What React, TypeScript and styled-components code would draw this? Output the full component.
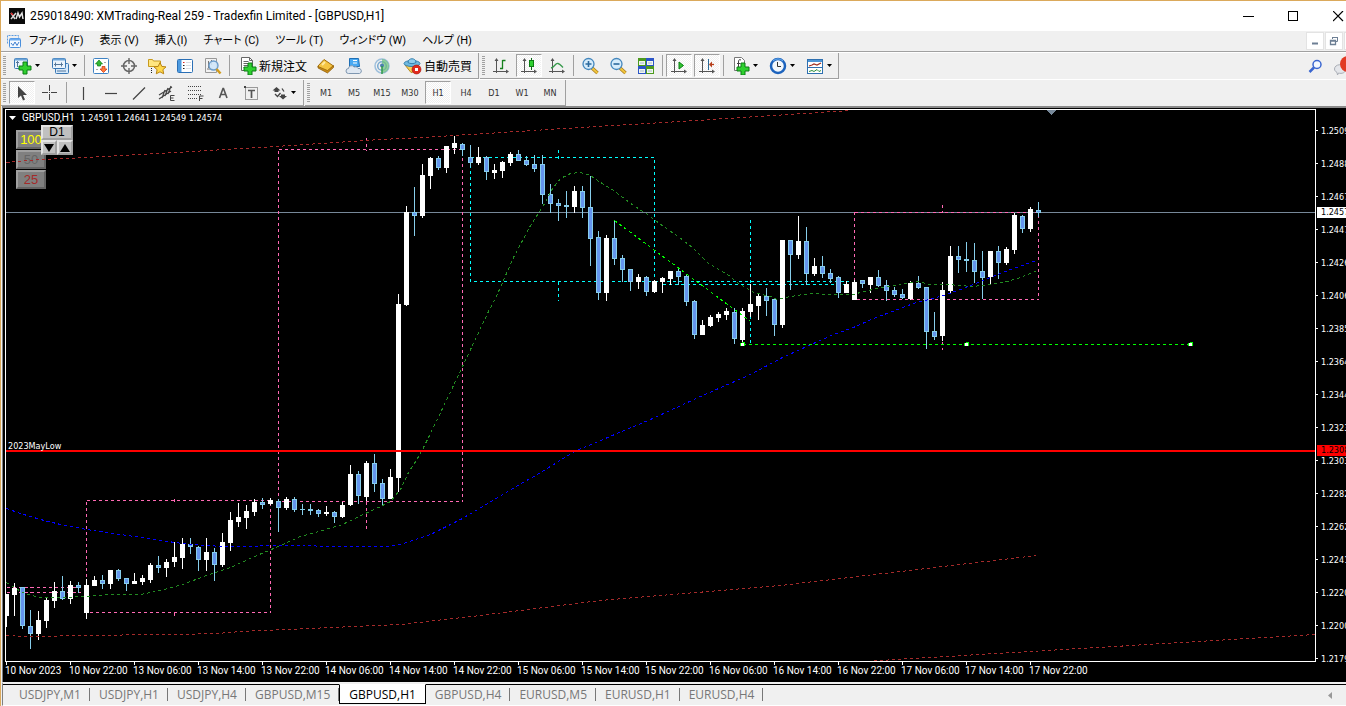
import React from "react";
import styled, { createGlobalStyle, css } from "styled-components";

const uiFont = `"Open Sans", "Noto Sans CJK JP", sans-serif`;
const smallFont = `"DejaVu Sans Condensed", "DejaVu Sans", sans-serif`;

const GlobalStyle = createGlobalStyle`
  *, *::before, *::after { box-sizing: border-box; }
  body { margin: 0; background: #f0f0f0; font-family: ${uiFont}; font-size: 12px; color: #000; }
  button { font: inherit; color: inherit; margin: 0; padding: 0; border: 0; background: none; cursor: default; }
  svg { display: block; flex: none; }
`;

const Window = styled.div`
  display: flex;
  flex-direction: column;
  min-height: 100vh;
  overflow: hidden;
  border-top: 1px solid #dba95b;
  border-left: 1px solid #dba95b;
`;

const TitleBar = styled.header`
  display: flex;
  align-items: center;
  height: 30px;
  padding-left: 8px;
  background: #fff;
`;

const TitleText = styled.h1`
  flex: 1;
  min-width: 0;
  margin: 0 0 0 5px;
  overflow: hidden;
  font-size: 12px;
  font-weight: 400;
  font-family: Roboto, sans-serif;
  line-height: 16px;
  white-space: nowrap;
`;

const CaptionButtons = styled.div`
  display: flex;
  width: 120px;
  overflow: hidden;
`;

const CaptionButton = styled.button`
  display: flex;
  flex: none;
  align-items: center;
  justify-content: center;
  width: 45px;
  height: 30px;
`;

const MenuBar = styled.nav`
  display: flex;
  align-items: center;
  height: 21px;
  padding-left: 5px;
  border-bottom: 1px solid #a0a0a0;
  background: #f0f0f0;
`;

const MenuItems = styled.div`
  display: flex;
  flex: 1;
  gap: 16px;
  margin-left: 8px;
`;

const MenuItem = styled.button`
  font-family: Roboto, "Noto Sans CJK JP", sans-serif;
  font-size: 11px;
  font-feature-settings: "palt";
  line-height: 16px;
  white-space: nowrap;
`;

const MdiButtons = styled.div`
  display: flex;
  gap: 1px;
  width: 40px;
  overflow: hidden;
`;

const MdiButton = styled.button`
  display: flex;
  flex: none;
  align-items: center;
  justify-content: center;
  width: 18px;
  height: 18px;
  border: 1px solid #e3e3e3;
  background: #fff;
`;

const ToolRow = styled.div`
  display: flex;
  height: 27px;
  border-top: 1px solid #fff;
  background: #f0f0f0;
`;

const ToolGroup = styled.div`
  display: flex;
  align-items: center;
  padding-right: 1px;
  border-right: 1px solid #a0a0a0;
  border-bottom: 1px solid #a0a0a0;
  margin-right: 1px;
`;

const Grip = styled.i`
  width: 3px;
  height: 19px;
  margin: 0 2px;
  background: repeating-linear-gradient(#a0a0a0 0 1px, #f0f0f0 1px 2px);
`;

const Divider = styled.i`
  width: 1px;
  height: 21px;
  margin: 0 2px;
  background: #a0a0a0;
`;

const ToolButton = styled.button<{ $wide?: boolean; $pressed?: boolean }>`
  display: flex;
  align-items: center;
  justify-content: center;
  gap: 3px;
  width: ${(p) => (p.$wide ? 37 : p.$pressed ? 26 : 28)}px;
  height: 23px;
  font-family: ${smallFont};
  font-size: 9px;
  color: #333;
  ${(p) =>
    p.$pressed &&
    css`
      margin: 0 1px;
      border: 1px solid #a0a0a0;
      border-right-color: #fff;
      border-bottom-color: #fff;
      background: repeating-conic-gradient(#fff 0 25%, #f0f0f0 0 50%) 0 0 / 2px 2px;
    `}
`;

const LabelButton = styled.button`
  display: flex;
  align-items: center;
  gap: 2px;
  padding: 0 5px 0 7px;
  height: 23px;
  font-family: "Noto Sans CJK JP", sans-serif;
  font-size: 12px;
  line-height: 16px;
  white-space: nowrap;
`;

const Spacer = styled.div`
  flex: 1;
`;

const ToolExtras = styled.div`
  display: flex;
  align-items: center;
  gap: 10px;
  width: 38px;
  overflow: hidden;
`;

const ChartPanel = styled.main`
  display: grid;
  flex: 1;
  grid-template-columns: minmax(0, 1fr) 30px;
  grid-template-rows: auto 1fr;
  margin-left: 1px;
  padding: 1px 0 0 2px;
  border-top: 2px solid #8a8a8a;
  border-left: 1px solid #808080;
  background: #000;
  color: #fff;
  font-family: ${smallFont};
  font-size: 9px;
`;

const Plot = styled.section`
  position: relative;
  border: 1px solid #fff;
`;

const ChartCanvas = styled.svg`
  position: relative;
  z-index: 1;
  width: 100%;
`;

const ChartCaption = styled.div`
  position: absolute;
  z-index: 2;
  top: 2px;
  left: 3px;
  display: flex;
  align-items: center;
  gap: 6px;
  line-height: 12px;
  white-space: nowrap;
`;

const SymbolName = styled.span`
  font-family: Roboto, sans-serif;
  font-size: 10px;
`;

const LevelName = styled.span`
  position: absolute;
  z-index: 2;
  top: 330px;
  left: 2px;
  font-size: 9px;
  line-height: 12px;
`;

const LotPanel = styled.div`
  position: absolute;
  top: 20px;
  left: 10px;
  display: flex;
  flex-direction: column;
  gap: 1px;
`;

const LotButton = styled.button<{ $color: string }>`
  width: 30px;
  height: 19px;
  border: 2px solid #a0a0a0;
  border-right-color: #646464;
  border-bottom-color: #646464;
  background: #808080;
  color: ${(p) => p.$color};
  font-family: "Liberation Sans", sans-serif;
  font-size: 13px;
  line-height: 15px;
`;

const FramePanel = styled.div`
  position: absolute;
  z-index: 2;
  top: 15px;
  left: 35px;
  display: grid;
  grid-template-columns: 16px 16px;
`;

const FrameButton = styled.button<{ $span?: boolean }>`
  display: flex;
  align-items: center;
  justify-content: center;
  grid-column: ${(p) => (p.$span ? "span 2" : "auto")};
  height: 15px;
  border: 2px solid #e3e3e3;
  border-right-color: #a0a0a0;
  border-bottom-color: #a0a0a0;
  background: #c0c0c0;
  color: #000;
  font-family: "Liberation Sans", sans-serif;
  font-size: 12px;
  line-height: 11px;
`;

const PriceAxis = styled.div`
  position: relative;
  overflow: hidden;
  height: 572px;
  margin-bottom: -19px;
  padding-top: 5px;
`;

const Price = styled.div`
  display: flex;
  align-items: center;
  gap: 3px;
  height: 33px;
  &::before {
    content: "";
    flex: none;
    width: 2px;
    height: 1px;
    background: #fff;
  }
`;

const PriceTag = styled.div<{ $top: number; $bg: string }>`
  position: absolute;
  top: ${(p) => p.$top}px;
  left: 1px;
  width: 40px;
  padding-left: 4px;
  background: ${(p) => p.$bg};
  color: #000;
  line-height: 11px;
`;

const TimeAxis = styled.div`
  display: flex;
  min-height: 20px;
  overflow: hidden;
`;

const TimeLabel = styled.div`
  flex: none;
  width: 64px;
  font-family: Roboto, sans-serif;
  font-size: 10px;
  line-height: 12px;
  white-space: nowrap;
  &::before {
    content: "";
    display: block;
    width: 1px;
    height: 3px;
    margin-left: 1px;
    background: #fff;
  }
`;

const TabBar = styled.nav`
  display: flex;
  height: 24px;
  margin-left: 1px;
  border-top: 2px solid #f0f0f0;
  border-left: 1px solid #808080;
  border-bottom: 1px solid #fff;
  background: #f0f0f0;
`;

const TabStrip = styled.div`
  display: flex;
  flex: 1;
  align-items: flex-start;
  border-top: 1px solid #000;
  padding-left: 7px;
`;

const Tab = styled.button<{ $active?: boolean }>`
  position: relative;
  height: 18px;
  padding: 0 9px;
  color: #777;
  font-size: 12px;
  line-height: 17px;
  white-space: nowrap;
  &::after {
    content: "";
    position: absolute;
    top: 3px;
    right: 0;
    width: 1px;
    height: 13px;
    background: ${(p) => (p.$active ? "none" : "#777")};
  }
  ${(p) =>
    p.$active &&
    css`
      height: 20px;
      margin-top: -1px;
      border: 1px solid #000;
      border-top-color: #fff;
      background: #fff;
      color: #000;
    `}
`;

const TabScroll = styled.button`
  display: flex;
  align-items: center;
  width: 18px;
  border-top: 1px solid #000;
`;

/* ---------- icons ---------- */

const Svg = ({ w = 18, h = 18, children }: { w?: number; h?: number; children: React.ReactNode }) => (
  <svg width={w} height={h} viewBox={`0 0 ${w} ${h}`} fill="none" aria-hidden="true">
    {children}
  </svg>
);

const Caret = () => (
  <Svg w={5} h={3}>
    <path d="M0 0h5L2.500 3z" fill="#000" />
  </Svg>
);

const Plus = () => (
  <path d="M9 7h4v4h4v4h-4v4H9v-4H5v-4h4z" fill="#2fd02f" stroke="#0b7d14" />
);

const NewChartIcon = () => (
  <Svg w={19} h={19}>
    <rect x="1.500" y="2.500" width="13" height="10" rx="1" fill="#eaf4fd" stroke="#3a78b5" />
    <path d="M2 3.500h12" stroke="#6ca4d8" strokeWidth="2" />
    <path d="M4.500 5v6M3 6.500h3M10 7h2" stroke="#55779a" />
    <g transform="translate(1 -1)"><Plus /></g>
  </Svg>
);
const ProfilesIcon = () => (
  <Svg>
    <rect x="4.500" y="6.500" width="13" height="10" rx="1" fill="#d5e9fb" stroke="#3a78b5" />
    <rect x="1.500" y="1.500" width="13" height="10" rx="1" fill="#eaf4fd" stroke="#3a78b5" />
    <path d="M2 2.500h12" stroke="#6ca4d8" strokeWidth="2" />
    <path d="M3 7.500h9M4.500 5.500v4M10.500 5.500v4M6 14h9" stroke="#55779a" />
  </Svg>
);
const MarketWatchIcon = () => (
  <Svg>
    <rect x="1.500" y="1.500" width="15" height="15" rx="1" fill="#fff" stroke="#3f83c4" />
    <path d="M7 3l3.500 4H8.500v2h-3V7H3.500z" fill="#35b835" stroke="#0b7d14" strokeWidth=".7" />
    <path d="M11.500 15.500L15 12h-2v-2.500h-3V12H8z" fill="#ff7a3c" stroke="#c8300d" strokeWidth=".7" />
    <path d="M4 12.500h2M12 5.500h2" stroke="#aaa" />
  </Svg>
);
const NavigatorIcon = () => (
  <Svg>
    <circle cx="9" cy="9" r="5.500" stroke="#666" strokeWidth="1.500" />
    <path d="M9 1v6M9 11v6M1 9h6M11 9h6" stroke="#666" strokeWidth="1.400" />
  </Svg>
);
const FolderStarIcon = () => (
  <Svg w={20}>
    <path d="M1.500 9.500v-7h4l1 1.500h7v5.500z" fill="#ffe680" stroke="#c79a1e" />
    <path d="M4.500 11v6" stroke="#222" strokeDasharray="1 1" />
    <path d="M13 5.500l1.800 3.900 4.200.5-3.100 2.800.8 4.100L13 14.800l-3.700 2 .8-4.100L7 9.900l4.200-.5z" fill="#ffd84a" stroke="#b88412" />
  </Svg>
);
const TerminalIcon = () => (
  <Svg>
    <rect x="1.500" y="2.500" width="15" height="13" rx="1" fill="#fff" stroke="#2a6fb5" />
    <path d="M2 3h3.500v12H2z" fill="#4d9be0" />
    <path d="M7 8.500h1.500M7 11.500h1.500" stroke="#222" />
    <path d="M10 5.500h5M10 8.500h5M10 11.500h5" stroke="#d8dde5" />
    <path d="M7 5.500h1.500" stroke="#e02020" />
  </Svg>
);
const TesterIcon = () => (
  <Svg>
    <path d="M1.500 1.500h11v14h-11z" fill="#f2f2f2" stroke="#999" />
    <path d="M4.500 4v7M7.500 3v5M3 12h6" stroke="#777" />
    <circle cx="9.500" cy="8.500" r="4.500" fill="#cfe6fa" fillOpacity=".9" stroke="#6b9ccb" strokeWidth="1.400" />
    <path d="M12.500 12l4 4.500" stroke="#d19b1c" strokeWidth="2.500" />
  </Svg>
);
const NewOrderIcon = () => (
  <Svg w={18} h={19}>
    <path d="M2.500 1.500h8l3 3v10h-11z" fill="#fff" stroke="#666" />
    <path d="M10.500 1.500v3h3M4.500 5.500h5M4.500 7.500h7M4.500 9.500h5M4.500 11.500h4" stroke="#666" />
    <Plus />
  </Svg>
);
const EditorIcon = () => (
  <Svg>
    <path d="M1 9l6-6.500L16.500 9l-6 6L1 10z" fill="#f5c542" stroke="#a36f0c" />
    <path d="M1 9.500l9.500 4 6-5v2L10.500 16 1 11z" fill="#c98c17" stroke="#8c5b08" strokeWidth=".7" />
    <path d="M5 8l3-3" stroke="#ffe9a0" strokeWidth="2" />
  </Svg>
);
const VpsIcon = () => (
  <Svg>
    <path d="M4.500 1.500h9l1 8h-10z" fill="#49a9f2" stroke="#1f6fb5" />
    <path d="M8 3.500h4M8 6h4" stroke="#fff" />
    <path d="M3.500 16.500a2.500 2.500 0 010-5 3 3 0 015.500-1.500 3 3 0 014 1.500 2.500 2.500 0 011.500 5z" fill="#dfe8f2" stroke="#7f97b0" />
  </Svg>
);
const SignalIcon = () => (
  <Svg>
    <circle cx="9" cy="9" r="7" stroke="#9dbfdc" strokeWidth="1.500" />
    <circle cx="9" cy="9" r="4.300" stroke="#7aaad0" strokeWidth="1.500" />
    <path d="M9 9V2a7 7 0 010 14z" fill="#6cc07a" fillOpacity=".7" />
    <circle cx="9" cy="8.500" r="2" fill="#4c7fb0" />
    <path d="M9 9v8" stroke="#2f9a48" strokeWidth="1.500" />
  </Svg>
);
const AutoTradeIcon = () => (
  <Svg w={19} h={19}>
    <path d="M2 9h13l-3 6.500-4 1z" fill="#f6cf58" stroke="#b98a19" />
    <ellipse cx="9" cy="7.500" rx="8" ry="3" fill="#6fb9e0" stroke="#3580ad" />
    <path d="M5 6.500c0-5 8-5 8 0-2 1.500-6 1.500-8 0z" fill="#8fcdee" stroke="#3580ad" />
    <circle cx="13.500" cy="13.500" r="4.500" fill="#e02a1c" stroke="#a81208" strokeWidth=".6" />
    <rect x="12" y="12" width="3" height="3" fill="#fff" />
  </Svg>
);
const Axes = () => (
  <>
    <path d="M4.500 3v13M1 14.500h14" stroke="#555" />
    <path d="M4.500 1l2 3h-4zM17 14.500l-3 2v-4z" fill="#555" />
  </>
);
const BarsIcon = () => (
  <Svg><Axes /><path d="M10.500 3v9M10.500 3.500h3M8 11.500h3" stroke="#16801d" strokeWidth="1.300" /></Svg>
);
const CandlesIcon = () => (
  <Svg><Axes /><path d="M11.500 1v12" stroke="#0b6b14" /><rect x="9.500" y="3.500" width="4" height="6" fill="#2fd02f" stroke="#0b7d14" /></Svg>
);
const LineIcon = () => (
  <Svg><Axes /><path d="M3 11c4-1 4-5 7-4.500 2 .5 3 2 5 4" stroke="#35994a" strokeWidth="1.300" /></Svg>
);
const ZoomIcon = ({ plus }: { plus?: boolean }) => (
  <Svg>
    <path d="M11 11l5.500 5" stroke="#a8791a" strokeWidth="3.500" />
    <path d="M11 11l5.500 5" stroke="#f0c63e" strokeWidth="2" />
    <circle cx="7.500" cy="7" r="5.500" fill="#d6ecfb" stroke="#4487bd" strokeWidth="1.300" />
    <path d={plus ? "M4.500 7h6M7.500 4v6" : "M4.500 7h6"} stroke="#2c6a9e" strokeWidth="1.600" />
  </Svg>
);
const TileIcon = () => (
  <Svg>
    <rect x="1" y="1" width="8" height="8" fill="#4c9a1e" />
    <rect x="9" y="1" width="8" height="8" fill="#2c55c8" />
    <rect x="1" y="9" width="8" height="8" fill="#2c55c8" />
    <rect x="9" y="9" width="8" height="8" fill="#4c9a1e" />
    <path d="M2 4h6v4H2zM10 4h6v4h-6zM2 12h6v4H2zM10 12h6v4h-6z" fill="#f2f7ee" />
    <path d="M3 6h4M11 6h4M3 14h4M11 14h4" stroke="#a9bccf" />
  </Svg>
);
const AutoScrollIcon = () => (
  <Svg><Axes /><path d="M9 5l4.500 3.500L9 12z" fill="#2fc52f" stroke="#0b7d14" /></Svg>
);
const ShiftIcon = () => (
  <Svg><Axes /><path d="M10.500 2v11" stroke="#2a6a98" /><path d="M16 7.500h-3" stroke="#b8401c" strokeWidth="1.300" /><path d="M11 7.500l3-3v6z" fill="#b8401c" /></Svg>
);
const IndicatorsIcon = () => (
  <Svg w={18} h={19}>
    <path d="M2.500 1.500h7l3 3v10h-10z" fill="#fff" stroke="#777" />
    <path d="M9 4c-2-1-2.500 0-2.500 2v6M5 7.500h3.500" stroke="#444" />
    <Plus />
  </Svg>
);
const PeriodsIcon = () => (
  <Svg>
    <circle cx="9" cy="9" r="7" fill="#f4f8fc" stroke="#1d63bd" strokeWidth="2.500" />
    <path d="M4 4a7 7 0 0110 0" stroke="#6db2f2" />
    <path d="M8.500 5v4.500H12" stroke="#333" />
  </Svg>
);
const TemplatesIcon = () => (
  <Svg>
    <rect x="1.500" y="2.500" width="15" height="14" fill="#fff" stroke="#2f70b0" />
    <path d="M2 4h14" stroke="#4c95d6" strokeWidth="2" />
    <path d="M3 9l3-1 2-1 3 1 4-2" stroke="#a03020" strokeWidth="1.300" />
    <path d="M2 10.500h14" stroke="#2f70b0" />
    <path d="M3 14.500l3-1 2 1 3-2 2 2 2-1" stroke="#2b8f3a" />
  </Svg>
);

const CursorIcon = () => (
  <Svg><path d="M5 2v12l3-2.500 2 5 2-1-2-4.500h4z" fill="#444" /></Svg>
);
const CrosshairIcon = () => (
  <Svg><path d="M8.500 1v6M8.500 10v6M1 8.500h6M10 8.500h6M8 8.500h1" stroke="#444" /></Svg>
);
const StrokeIcon = ({ d }: { d: string }) => (
  <Svg><path d={d} stroke="#444" strokeWidth="1.200" /></Svg>
);
const ChannelIcon = () => (
  <Svg>
    <path d="M1 11l13-8M1 15l12-8M4 14L7 6M7 12l3-8M10 10l3-8" stroke="#444" strokeWidth="1.200" />
    <path d="M16.500 11.500h-4v5h4M12.500 14h3" stroke="#444" />
  </Svg>
);
const FiboIcon = () => (
  <Svg>
    <path d="M2 2.500h14M2 6.500h14M2 10.500h14M2 14.500h9" stroke="#444" strokeDasharray="1 1" />
    <path d="M13.500 17v-5h4M13.500 14.500h3" stroke="#444" />
  </Svg>
);
const TextIcon = () => (
  <Svg><path d="M5.500 14L9 4.500h.5L13 14M6.500 10.500h5.500" stroke="#555" strokeWidth="1.600" /></Svg>
);
const TextLabelIcon = () => (
  <Svg>
    <rect x="3.500" y="3.500" width="12" height="12" stroke="#444" strokeDasharray="1 1" />
    <path d="M6 6.500h7M9.500 6.500V14" stroke="#555" strokeWidth="1.700" />
    <path d="M2 2h2v2H2z" fill="#444" />
  </Svg>
);
const ArrowsIcon = () => (
  <Svg w={16}>
    <path d="M4.500 3l4 3.500h-2V8h-4V6.500h-2z" fill="#444" />
    <path d="M11 15.500L7 12h2v-1.500h4V12h2z" fill="#444" />
    <path d="M3 10l2.500 2.500L8.500 9M10 4.500l2 3" stroke="#444" strokeWidth="1.300" />
  </Svg>
);

/* ---------- chart data ---------- */

// [high, bodyTop, bodyBottom, low, rising]
type Candle = [number, number, number, number, number];
const candles: Candle[] = [
  [594, 594, 616, 627, 1], [583, 588, 595, 616, 1], [587, 587, 626, 629, 0], [610, 626, 634, 649, 0],
  [611, 620, 634, 640, 1], [597, 600, 621, 628, 1], [582, 591, 601, 608, 1], [576, 591, 599, 600, 0],
  [581, 585, 599, 604, 1], [582, 585, 588, 593, 0], [579, 585, 613, 619, 1], [576, 580, 586, 586, 1],
  [575, 580, 584, 589, 0], [570, 570, 584, 589, 1], [569, 570, 579, 581, 0], [578, 578, 584, 591, 0],
  [573, 581, 584, 584, 1], [575, 578, 582, 585, 1], [563, 565, 580, 583, 1], [556, 565, 568, 573, 0],
  [559, 562, 568, 577, 1], [542, 557, 562, 567, 1], [538, 544, 558, 569, 1], [538, 544, 547, 554, 0],
  [546, 547, 560, 571, 0], [538, 552, 560, 571, 1], [548, 552, 565, 581, 0], [533, 542, 565, 567, 1],
  [512, 520, 543, 551, 1], [503, 517, 522, 527, 1], [505, 511, 518, 529, 1], [499, 502, 512, 516, 1],
  [498, 502, 505, 509, 0], [498, 500, 504, 505, 1], [499, 501, 508, 532, 0], [497, 499, 508, 510, 1],
  [497, 499, 510, 512, 0], [504, 509, 510, 515, 0], [504, 509, 511, 515, 0], [509, 510, 514, 517, 0],
  [506, 512, 514, 516, 1], [511, 512, 517, 523, 0], [502, 505, 517, 518, 1], [465, 474, 505, 506, 1],
  [471, 474, 496, 504, 0], [461, 463, 497, 501, 1], [454, 463, 484, 492, 0], [479, 483, 499, 506, 0],
  [469, 477, 499, 499, 1], [294, 304, 478, 492, 1], [206, 212, 305, 306, 1], [187, 212, 216, 236, 0],
  [164, 175, 216, 218, 1], [157, 158, 176, 189, 1], [156, 158, 168, 170, 0], [146, 146, 168, 173, 1],
  [136, 143, 148, 154, 1], [143, 144, 150, 156, 0], [145, 157, 163, 167, 0], [147, 157, 163, 165, 1],
  [156, 157, 172, 180, 0], [164, 170, 173, 179, 1], [161, 162, 171, 178, 1], [152, 154, 163, 166, 1],
  [150, 154, 161, 161, 0], [156, 160, 165, 166, 0], [155, 164, 169, 172, 0], [155, 164, 195, 204, 0],
  [184, 194, 204, 213, 0], [199, 203, 206, 221, 0], [191, 205, 207, 218, 0], [186, 191, 207, 213, 1],
  [186, 191, 208, 218, 0], [176, 207, 239, 266, 0], [231, 237, 293, 300, 0], [235, 238, 293, 301, 1],
  [220, 238, 259, 265, 0], [255, 258, 270, 282, 0], [269, 269, 282, 291, 0], [274, 277, 282, 289, 1],
  [276, 277, 292, 296, 0], [280, 281, 292, 293, 1], [277, 278, 282, 293, 1], [271, 271, 279, 285, 1],
  [267, 271, 277, 285, 0], [275, 276, 302, 306, 0], [300, 301, 335, 339, 0], [320, 325, 335, 335, 1],
  [315, 317, 326, 327, 1], [312, 314, 318, 322, 1], [308, 311, 315, 320, 1], [308, 312, 339, 344, 0],
  [308, 311, 340, 343, 1], [284, 304, 312, 317, 1], [294, 296, 306, 320, 1], [288, 296, 301, 316, 0],
  [298, 299, 325, 336, 0], [240, 240, 325, 328, 1], [240, 240, 255, 290, 0], [216, 241, 255, 259, 1],
  [227, 241, 274, 285, 0], [258, 266, 274, 276, 1], [256, 266, 274, 278, 0], [269, 273, 279, 283, 0],
  [276, 277, 293, 298, 0], [281, 284, 293, 293, 1], [280, 282, 300, 300, 1], [280, 280, 284, 288, 0],
  [277, 277, 285, 293, 1], [270, 277, 286, 287, 0], [280, 285, 291, 301, 0], [287, 290, 295, 297, 0],
  [289, 294, 298, 299, 0], [281, 283, 299, 300, 1], [276, 283, 288, 289, 0], [287, 287, 332, 349, 0],
  [312, 331, 337, 340, 0], [282, 290, 336, 341, 1], [246, 256, 291, 294, 1], [246, 256, 260, 273, 0],
  [242, 259, 261, 272, 0], [243, 260, 272, 283, 0], [251, 271, 278, 299, 0], [251, 251, 277, 285, 1],
  [246, 251, 263, 279, 0], [247, 249, 263, 265, 1], [213, 215, 250, 254, 1], [215, 216, 229, 233, 0],
  [207, 209, 229, 232, 1], [202, 210, 213, 217, 0],
];

const averages = [
  {
    color: "#0000ff",
    points:
      "6,508 20,513 40,519 60,524 86,529 112,533 134,536 160,540 182,543 206,545 222,546 250,546 270,545 300,545 330,546 385,546 400,544 430,534 462,518 507,491 540,472 576,450 600,440 650,419 700,396 750,374 780,358 793,352 813,343 833,334 853,327 873,318 897,309 913,303 943,295 963,288 990,277 1010,269 1036,260",
  },
  {
    color: "#228b22",
    points:
      "6,582 14,587 22,592 38,597 60,597 86,596 110,594 140,594 160,590 182,584 206,575 230,567 254,556 278,546 300,536 318,531 342,524 367,512 380,506 390,501 395,495 400,489 408,472 417,458 423,447 430,433 454,383 488,311 495,298 502,282 513,257 530,225 543,205 552,188 560,178 570,173 580,172 590,175 597,180 613,190 633,205 647,214 663,226 679,237 693,248 707,262 727,274 737,282 747,288 753,292 770,296 777,299 790,296 810,293 833,294 853,294 863,291 877,288 890,286 903,283 917,281 930,284 947,284 960,285 970,286 983,285 1003,282 1017,278 1037,270",
  },
  { color: "#a52a2a", points: "6,162 40,159 87,157 260,147 380,139 422,137 470,134 580,127 680,121 850,110" },
  {
    color: "#a52a2a",
    points: "6,635 26,636 47,636 67,635 177,634 217,633 240,631 400,624 480,615 600,600 780,585 900,571 1036,555",
  },
  { color: "#a52a2a", points: "862,661 1315,634" },
  { color: "#00ff00", points: "614,220 750,321" },
];

const pink = "#ff69b4";
const cyan = "#00ffff";
const lime = "#00ff00";
const boxes = [
  { color: pink, d: "M6 587H80M6 592H80M86 500H270V612H86ZM174 498V502M174 612V615" },
  { color: pink, d: "M278 149H462V501H278ZM366 137V150M366 501V529" },
  { color: pink, d: "M854 212H1038V299H854ZM942 204V212M942 341V349" },
  { color: cyan, d: "M470 157H654V281H470ZM558 149V158M558 281V300" },
  { color: cyan, d: "M654 281H848M662 284H848M750 219V343" },
  { color: lime, d: "M742 344H1190" },
];

const prices = [
  "1.25095", "1.24885", "1.24675", "1.24470", "1.24260", "1.24060", "1.23850", "1.23640", "1.23440",
  "1.23230", "1.23030", "1.22820", "1.22620", "1.22410", "1.22200", "1.22000", "1.21790",
];

const times = [
  "10 Nov 2023", "10 Nov 22:00", "13 Nov 06:00", "13 Nov 14:00", "13 Nov 22:00", "14 Nov 06:00",
  "14 Nov 14:00", "14 Nov 22:00", "15 Nov 06:00", "15 Nov 14:00", "15 Nov 22:00", "16 Nov 06:00",
  "16 Nov 14:00", "16 Nov 22:00", "17 Nov 06:00", "17 Nov 14:00", "17 Nov 22:00",
];

const Chart = () => (
  <ChartCanvas height={551} role="img" aria-label="GBPUSD H1 candlestick chart">
    <g transform="translate(-6 -110)" shapeRendering="crispEdges">
      <rect x="6" y="212" width="100%" height="1" fill="#778899" />
      <g fill="none" strokeWidth={1} strokeDasharray="3 3" transform="translate(.5 .5)">
        {boxes.map((s) => (
          <path key={s.d} d={s.d} stroke={s.color} />
        ))}
      </g>
      {candles.map(([high, top, bottom, low, up], i) => {
        const x = 6 + i * 8;
        const edge = up ? "#fff" : "#87ceeb";
        return (
          <g key={i}>
            <rect x={x} y={high} width={1} height={low - high} fill={edge} />
            <rect x={x - 2} y={top} width={5} height={bottom - top} fill={edge} />
            {!up && bottom - top > 2 && (
              <rect x={x - 1} y={top + 1} width={3} height={bottom - top - 2} fill="#6495ed" />
            )}
          </g>
        );
      })}
      <g fill="none" strokeWidth={1} strokeDasharray="3 3" transform="translate(.5 .5)">
        {averages.map((s) => (
          <polyline key={s.points} points={s.points} stroke={s.color} />
        ))}
      </g>
      {[742, 966, 1190].map((x) => (
        <g key={x}>
          <path d={`M${x} 342h3v4h-1v-3h-2zM${x - 2} 343h1v3h-1z`} fill={lime} />
          <rect x={x - 1} y="343" width="3" height="3" fill="#fff" />
        </g>
      ))}
      <rect x="6" y="450" width="100%" height="2" fill="#ff0000" />
      <path d="M1046 110h11l-5.500 5z" fill="#778899" />
    </g>
  </ChartCanvas>
);

const menus = ["ファイル (F)", "表示 (V)", "挿入(I)", "チャート (C)", "ツール (T)", "ウィンドウ (W)", "ヘルプ (H)"];
const periods = ["M1", "M5", "M15", "M30", "H1", "H4", "D1", "W1", "MN"];
const tabs = [
  "USDJPY,M1", "USDJPY,H1", "USDJPY,H4", "GBPUSD,M15", "GBPUSD,H1", "GBPUSD,H4", "EURUSD,M5", "EURUSD,H1", "EURUSD,H4",
];

export default function App() {
  return (
    <Window>
      <GlobalStyle />
      <TitleBar>
        <Svg w={16} h={16}>
          <rect width="16" height="16" fill="#0a0a0a" />
          <path d="M2 5l4 6M7 5l-5 6" stroke="#d8d8d8" strokeWidth="1.500" />
          <path d="M2 5l2 2" stroke="#e02020" strokeWidth="1.500" />
          <path d="M7 11l2-6 1.500 4L13 5l1 6" stroke="#e6e6e6" strokeWidth="1.500" />
        </Svg>
        <TitleText>259018490: XMTrading-Real 259 - Tradexfin Limited - [GBPUSD,H1]</TitleText>
        <CaptionButtons>
          <CaptionButton aria-label="Minimize"><Svg w={11} h={11}><path d="M0 5.500h11" stroke="#000" /></Svg></CaptionButton>
          <CaptionButton aria-label="Maximize"><Svg w={11} h={11}><rect x=".5" y=".5" width="9" height="9" stroke="#000" /></Svg></CaptionButton>
          <CaptionButton aria-label="Close"><Svg w={11} h={11}><path d="M0 0l10 10M10 0L0 10" stroke="#000" strokeWidth="1.200" /></Svg></CaptionButton>
        </CaptionButtons>
      </TitleBar>

      <MenuBar>
        <Svg w={15} h={15}>
          <path d="M1.500 9.500v-8h11v3" stroke="#5b9be0" strokeDasharray="2 1" />
          <rect x="3.500" y="4.500" width="11" height="9" rx="1" fill="#f4f9ff" stroke="#4a8fdc" />
          <path d="M4 5.500h10" stroke="#6aaaf0" strokeWidth="2" />
          <path d="M5 9l2 2.500L9 8l2 3.500L13 8" stroke="#3f7fd0" />
        </Svg>
        <MenuItems>{menus.map((m) => <MenuItem key={m}>{m}</MenuItem>)}</MenuItems>
        <MdiButtons>
          <MdiButton aria-label="Minimize chart"><Svg w={10} h={10}><path d="M2 7.500h6" stroke="#6d7f94" strokeWidth="2" /></Svg></MdiButton>
          <MdiButton aria-label="Restore chart">
            <Svg w={10} h={10}>
              <path d="M3.500 3V1.500h5v4H7M3 1.500h6" stroke="#6d7f94" />
              <path d="M1.500 4.500h5v4h-5zM1 5h6" stroke="#6d7f94" strokeWidth="1.300" />
            </Svg>
          </MdiButton>
          <MdiButton aria-label="Close chart" />
        </MdiButtons>
      </MenuBar>

      <ToolRow>
        <ToolGroup>
          <Grip />
          <ToolButton $wide aria-label="New chart"><NewChartIcon /><Caret /></ToolButton>
          <ToolButton $wide aria-label="Profiles"><ProfilesIcon /><Caret /></ToolButton>
          <Divider />
          <ToolButton aria-label="Market watch"><MarketWatchIcon /></ToolButton>
          <ToolButton aria-label="Data window"><NavigatorIcon /></ToolButton>
          <ToolButton aria-label="Navigator"><FolderStarIcon /></ToolButton>
          <ToolButton aria-label="Terminal"><TerminalIcon /></ToolButton>
          <ToolButton aria-label="Strategy tester"><TesterIcon /></ToolButton>
          <Divider />
          <LabelButton><NewOrderIcon />新規注文</LabelButton>
          <ToolButton aria-label="MetaEditor"><EditorIcon /></ToolButton>
          <ToolButton aria-label="Virtual hosting"><VpsIcon /></ToolButton>
          <ToolButton aria-label="Signals"><SignalIcon /></ToolButton>
          <LabelButton><AutoTradeIcon />自動売買</LabelButton>
        </ToolGroup>
        <ToolGroup>
          <Grip />
          <ToolButton aria-label="Bar chart"><BarsIcon /></ToolButton>
          <ToolButton $pressed aria-label="Candlesticks"><CandlesIcon /></ToolButton>
          <ToolButton aria-label="Line chart"><LineIcon /></ToolButton>
          <Divider />
          <ToolButton aria-label="Zoom in"><ZoomIcon plus /></ToolButton>
          <ToolButton aria-label="Zoom out"><ZoomIcon /></ToolButton>
          <ToolButton aria-label="Tile windows"><TileIcon /></ToolButton>
          <Divider />
          <ToolButton $pressed aria-label="Auto scroll"><AutoScrollIcon /></ToolButton>
          <ToolButton $pressed aria-label="Chart shift"><ShiftIcon /></ToolButton>
          <Divider />
          <ToolButton $wide aria-label="Indicators"><IndicatorsIcon /><Caret /></ToolButton>
          <ToolButton $wide aria-label="Periods"><PeriodsIcon /><Caret /></ToolButton>
          <ToolButton $wide aria-label="Templates"><TemplatesIcon /><Caret /></ToolButton>
        </ToolGroup>
        <Spacer />
        <ToolExtras>
          <button aria-label="Search">
            <Svg w={15} h={15}>
              <circle cx="9" cy="5.500" r="4" fill="#f4f9ff" stroke="#3a66d0" strokeWidth="1.500" />
              <path d="M6 8.500L1.500 13" stroke="#3a66d0" strokeWidth="2.500" />
            </Svg>
          </button>
          <button aria-label="Notifications">
            <Svg w={22} h={20}>
              <path d="M1.500 13c0-5 9-6 11-1 1 5-4 6-7 5l-1 2-.5-2.500c-1.500-1-2.500-2-2.500-3.500z" fill="#e4e6ea" stroke="#a9adb5" />
              <circle cx="15" cy="8" r="8" fill="#e23a24" />
            </Svg>
          </button>
        </ToolExtras>
      </ToolRow>

      <ToolRow>
        <ToolGroup>
          <Grip />
          <ToolButton $pressed aria-label="Cursor"><CursorIcon /></ToolButton>
          <ToolButton aria-label="Crosshair"><CrosshairIcon /></ToolButton>
          <Divider />
          <ToolButton aria-label="Vertical line"><StrokeIcon d="M9.500 3v13" /></ToolButton>
          <ToolButton aria-label="Horizontal line"><StrokeIcon d="M3 9.500h12" /></ToolButton>
          <ToolButton aria-label="Trend line"><StrokeIcon d="M3 15.500L15 3.500" /></ToolButton>
          <ToolButton aria-label="Channel"><ChannelIcon /></ToolButton>
          <ToolButton aria-label="Fibonacci"><FiboIcon /></ToolButton>
          <ToolButton aria-label="Text"><TextIcon /></ToolButton>
          <ToolButton aria-label="Text label"><TextLabelIcon /></ToolButton>
          <ToolButton $wide aria-label="Arrows"><ArrowsIcon /><Caret /></ToolButton>
        </ToolGroup>
        <ToolGroup>
          <Grip />
          {periods.map((p) => <ToolButton key={p} $pressed={p === "H1"}>{p}</ToolButton>)}
        </ToolGroup>
      </ToolRow>

      <ChartPanel>
        <Plot>
          <LotPanel>
            <LotButton $color="#ffff00">100</LotButton>
            <LotButton $color="#666">50</LotButton>
            <LotButton $color="#a52a2a">25</LotButton>
          </LotPanel>
          <Chart />
          <ChartCaption>
            <Svg w={7} h={4}><path d="M0 0h7L3.500 4z" fill="#fff" /></Svg>
            <SymbolName>GBPUSD,H1</SymbolName>
            <span>1.24591 1.24641 1.24549 1.24574</span>
          </ChartCaption>
          <FramePanel>
            <FrameButton $span>D1</FrameButton>
            <FrameButton aria-label="Lower timeframe"><Svg w={10} h={8}><path d="M0 0h10L5 8z" fill="#000" /></Svg></FrameButton>
            <FrameButton aria-label="Higher timeframe"><Svg w={10} h={8}><path d="M0 8h10L5 0z" fill="#000" /></Svg></FrameButton>
          </FramePanel>
          <LevelName>2023MayLow</LevelName>
        </Plot>
        <PriceAxis>
          {prices.map((p) => <Price key={p}>{p}</Price>)}
          <PriceTag $top={98} $bg="#fff">1.24574</PriceTag>
          <PriceTag $top={336} $bg="#f00">1.23080</PriceTag>
        </PriceAxis>
        <TimeAxis>{times.map((t) => <TimeLabel key={t}>{t}</TimeLabel>)}</TimeAxis>
      </ChartPanel>

      <TabBar>
        <TabStrip>
          {tabs.map((t) => <Tab key={t} $active={t === "GBPUSD,H1"}>{t}</Tab>)}
        </TabStrip>
        <TabScroll aria-label="Scroll tabs left">
          <Svg w={4} h={7}><path d="M4 0v7L0 3.500z" fill="#999" /></Svg>
        </TabScroll>
      </TabBar>
    </Window>
  );
}
